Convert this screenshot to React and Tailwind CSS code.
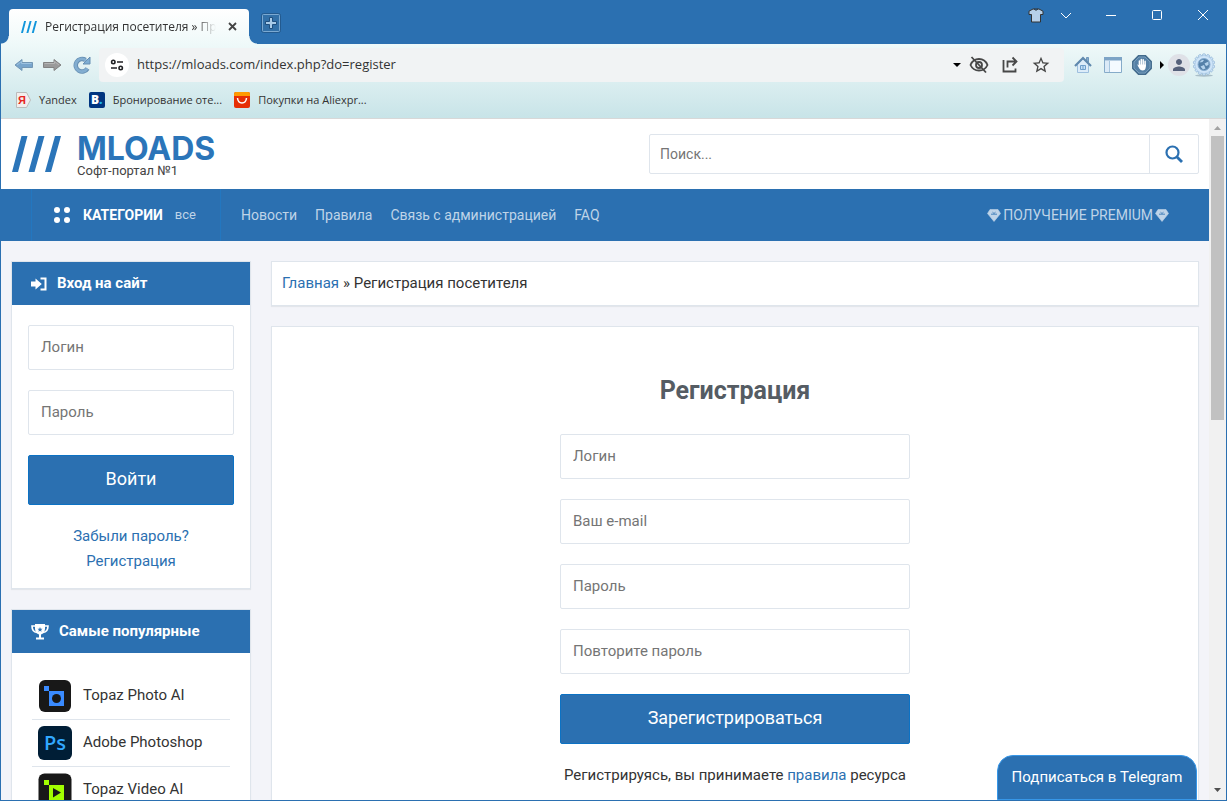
import React, { useState } from 'react';
import { MdStarBorder, MdPerson } from 'react-icons/md';

const menuLinks = ['Новости', 'Правила', 'Связь с администрацией', 'FAQ'];

const registerFields = [
  { id: 'login', label: 'Логин', type: 'text' },
  { id: 'email', label: 'Ваш e-mail', type: 'email' },
  { id: 'password', label: 'Пароль', type: 'password' },
  { id: 'password2', label: 'Повторите пароль', type: 'password' },
];

function Slashes({ className }) {
  return (
    <svg viewBox="0 0 49 36" className={className} fill="currentColor" aria-hidden="true">
      <path d="M9.5 0H15.5L6 36H0ZM26.5 0H32.5L22.5 36H16.5ZM43 0H49L39 36H33Z" />
    </svg>
  );
}

function ArrowLeft() {
  return (
    <svg viewBox="0 0 20 14" className="w-5 h-[14px]">
      <path d="M1 7L8 1.5V4.5H18.5V9.5H8V12.5Z" fill="#78a5cc" stroke="#7397b5" />
      <path d="M3 7L7.5 3.5V5.5H17.5" fill="none" stroke="#9dc2e0" />
    </svg>
  );
}

function ArrowRight() {
  return (
    <svg viewBox="0 0 20 14" className="w-5 h-[14px]">
      <path d="M19 7L12 1.5V4.5H1.5V9.5H12V12.5Z" fill="#9a9a9a" stroke="#828282" />
      <path d="M2.5 5.5H12.5V3.5L17 7" fill="none" stroke="#b5b5b5" />
    </svg>
  );
}

function Reload() {
  return (
    <svg viewBox="0 0 18 18" className="w-[18px] h-[18px]">
      <path d="M14.5 12.5A6.3 6.3 0 1 1 12.5 4" fill="none" stroke="#668fb3" strokeWidth="4.5" />
      <path d="M17 1V8H10Z" fill="#7faed4" stroke="#668fb3" />
      <path d="M14.2 12.5A6.3 6.3 0 1 1 13 4.5" fill="none" stroke="#82add0" strokeWidth="2.8" />
    </svg>
  );
}

function SiteSettings() {
  return (
    <svg viewBox="0 0 14 12" className="w-[14px] h-3" fill="none" stroke="#202124" strokeWidth="1.6">
      <circle cx="3.3" cy="3" r="1.7" />
      <path d="M7 3H13M1 9H7" />
      <circle cx="10.7" cy="9" r="1.7" />
    </svg>
  );
}

function HiddenEye() {
  return (
    <svg viewBox="0 0 20 18" className="w-5 h-[18px]" fill="none" stroke="#474747" strokeWidth="1.8">
      <path d="M1.5 9Q4 3 10 3Q16 3 18.5 9Q16 14.5 10 14.5Q4 14.5 1.5 9Z" />
      <circle cx="10" cy="9" r="3" />
      <path d="M2.5 1L17 16.5" />
    </svg>
  );
}

function Share() {
  return (
    <svg viewBox="0 0 18 18" className="w-[18px] h-[18px]" fill="none" stroke="#474747" strokeWidth="1.8">
      <path d="M2.5 4V15.5H14.5V12.5M6.5 11.5V5.5H14M11.5 1.5L15.5 5.5L11.5 9.5" />
    </svg>
  );
}

function House() {
  return (
    <svg viewBox="0 0 18 18" className="w-[18px] h-[18px]">
      <path d="M3.5 8.5L9 3L14.5 8.5V16.5H3.5Z" fill="#dcecf9" stroke="#9dbfde" />
      <path d="M12.5 1.5H14.5V6H12.5Z" fill="#86abcb" stroke="#6e97bb" />
      <path d="M1 10L9 2L17 10" fill="none" stroke="#6089ae" strokeWidth="2.2" />
      <path d="M6.5 9.5H11.5V13.5H6.5ZM9 9.5V13.5" fill="#c4e0f7" stroke="#6f9fcb" />
    </svg>
  );
}

function PanelLayout() {
  return (
    <svg viewBox="0 0 18 16" className="w-[18px] h-4">
      <path d="M.5.5H17.5V15.5H.5Z" fill="#f4faff" stroke="#86abc9" />
      <path d="M0 0H18V3.5H0Z" fill="#7da4c6" />
      <path d="M1 4H5V15H1Z" fill="#dbeaf7" />
      <path d="M5.5 4V15" stroke="#a6c5de" />
    </svg>
  );
}

function Hand() {
  return (
    <svg viewBox="0 0 20 20" className="w-5 h-5">
      <path d="M6.5.8H13.5L19.2 6.5V13.5L13.5 19.2H6.5L.8 13.5V6.5Z" fill="#5b87ad" stroke="#436b8c" strokeWidth="1.5" />
      <path d="M7 2H13L18 7V13L13 18H7L2 13V7Z" fill="#5681a6" stroke="#8fb0cb" strokeWidth=".6" />
      <path d="M7.4 11V6M9.3 10V4.6M11.2 10V4.8M13.1 11V6.2" stroke="#fff" strokeWidth="1.5" strokeLinecap="round" />
      <path d="M5.2 9.5Q6.5 9.2 7.5 11L8 9.5H13.8V12Q13.5 15.5 10.5 15.5Q8.5 15.5 7.3 13.5Z" fill="#fff" />
    </svg>
  );
}

function Gear() {
  const teeth = Array.from({ length: 14 }, (_, i) => (i * 360) / 14);
  return (
    <svg viewBox="0 0 24 24" className="w-6 h-6">
      <ellipse cx="12" cy="22.5" rx="9" ry="1.2" fill="#a9bec8" />
      {teeth.map(a => (
        <rect key={a} x="10.5" y=".8" width="3" height="4" rx="1" fill="#cfe5f8" stroke="#8db1d3" strokeWidth=".7" transform={`rotate(${a} 12 11.5)`} />
      ))}
      <circle cx="12" cy="11.5" r="9" fill="#cfe5f8" stroke="#a3c4e2" strokeWidth=".6" />
      <circle cx="12" cy="11.5" r="6" fill="#5581a8" stroke="#86acd0" />
      <path d="M7.5 9.5Q9.5 6 12 7L10.5 9ZM12.5 10.5L16.5 8.5V12L14 13ZM8.5 13.5L12 12L13.5 15.5L11 16.5Z" fill="#b4d3ec" />
    </svg>
  );
}

function Shirt() {
  return (
    <svg viewBox="0 0 16 15" className="w-4 h-[15px]">
      <path d="M5 1H11L15 3.2V6.5H12.5V14H3.5V6.5H1V3.2Z" fill="#b5cfe9" stroke="#333" strokeLinejoin="round" />
      <path d="M6 1Q8 3.5 10 1" fill="#2b70b1" stroke="#333" />
    </svg>
  );
}

function Diamond() {
  return (
    <svg viewBox="0 0 14 13" className="w-[14px] h-[13px]">
      <path d="M3 .5H11L13.5 4.5L7 12.5L.5 4.5Z" fill="#bfd4e8" stroke="#bfd4e8" strokeWidth=".6" />
      <path d="M4 5.2H10M5.5 3.2L7 4.5L8.5 3.2" stroke="#2b70b1" strokeWidth=".8" fill="none" />
    </svg>
  );
}

function LoginIcon() {
  return (
    <svg viewBox="0 0 16 14" className="w-4 h-[14px]" fill="#fff">
      <path d="M0 4.5H4.5V1.5L10.8 7L4.5 12.5V9.5H0Z" />
      <path d="M9.5 1.5H14.5V12.5H9.5" fill="none" stroke="#fff" strokeWidth="2" />
    </svg>
  );
}

function Trophy() {
  return (
    <svg viewBox="0 0 18 16" className="w-[18px] h-4">
      <path d="M4.5 2H1Q1 8 6 8.5M13.5 2H17Q17 8 12 8.5" fill="none" stroke="#fff" strokeWidth="1.6" />
      <path d="M4 0H14V5Q13.5 9.5 10 10.5V13.5H13V15.5H5V13.5H8V10.5Q4.5 9.5 4 5Z" fill="#fff" />
      <path d="M9 3L9.7 4.8H11.5L10.1 6L10.6 7.8L9 6.8L7.4 7.8L7.9 6L6.5 4.8H8.3Z" fill="#2b70b1" />
    </svg>
  );
}

function TopazPhoto() {
  return (
    <svg viewBox="0 0 34 34" className="w-[34px] h-[34px]">
      <rect x="1" y="1" width="32" height="32" rx="6" fill="#181818" />
      <path d="M6 7H11V12H6ZM11 12H26V27H11Z" fill="#3a8bff" />
      <circle cx="18.5" cy="19.5" r="4.5" fill="#181818" />
    </svg>
  );
}

function Photoshop() {
  return (
    <span className="flex items-center justify-center w-[34px] h-[34px] rounded-md bg-[#001e36] text-[#31a8ff] text-[20px] font-semibold font-['Open_Sans',sans-serif]">
      Ps
    </span>
  );
}

function TopazVideo() {
  return (
    <svg viewBox="0 0 34 34" className="w-[34px] h-[34px]">
      <rect x=".5" y=".5" width="33" height="33" rx="6" fill="#181818" />
      <path d="M6 7H11V12H6ZM11 12H26V28H11Z" fill="#a2ff00" />
      <path d="M15 15L23 19.5L15 24.5Z" fill="#181818" />
    </svg>
  );
}

const popular = [
  { name: 'Topaz Photo AI', Icon: TopazPhoto },
  { name: 'Adobe Photoshop', Icon: Photoshop },
  { name: 'Topaz Video AI', Icon: TopazVideo },
];

function TitleBar() {
  return (
    <div className="flex h-[43px] shrink-0 items-end bg-[#2b70b1] pl-2">
      <div className="relative flex h-[35px] w-60 items-center rounded-t bg-linear-to-b from-white to-[#eff9f9] px-3">
        <span className="absolute bottom-0 -left-2 w-2 h-2 bg-[radial-gradient(circle_at_0_0,#2b70b1_7px,#eff9f9_8px)]" />
        <span className="absolute bottom-0 -right-2 w-2 h-2 bg-[radial-gradient(circle_at_100%_0,#2b70b1_7px,#eff9f9_8px)]" />
        <Slashes className="w-4 h-3 text-[#1296db]" />
        <span className="ml-2 flex-1 overflow-hidden whitespace-nowrap text-[12px] text-[#333] [mask-image:linear-gradient(to_right,black_88%,transparent)]">
          Регистрация посетителя » Про
        </span>
        <button type="button" aria-label="Закрыть вкладку" className="ml-3">
          <svg viewBox="0 0 9 9" className="w-[9px] h-[9px]" stroke="#444" strokeWidth="1.8"><path d="M1 1L8 8M8 1L1 8" /></svg>
        </button>
      </div>
      <button type="button" aria-label="Новая вкладка" className="mb-[11px] ml-3">
        <svg viewBox="0 0 20 20" className="w-5 h-5">
          <rect x=".5" y=".5" width="19" height="19" rx="2" fill="#3270a8" stroke="#235a8f" />
          <rect x="1.5" y="1.5" width="17" height="17" rx="1" fill="none" stroke="#7ba9d2" />
          <path d="M8.5 4.5H11.5V8.5H15.5V11.5H11.5V15.5H8.5V11.5H4.5V8.5H8.5Z" fill="#a9cbe8" stroke="#1f4f7f" />
        </svg>
      </button>
      <div className="ml-auto flex items-center self-start pt-[5px] text-white">
        <button type="button" aria-label="Тема" className="flex w-8 h-[18px] items-center justify-center"><Shirt /></button>
        <button type="button" aria-label="Вкладки" className="flex w-7 h-[18px] items-center justify-center">
          <svg viewBox="0 0 12 7" className="w-3 h-[7px]" fill="none" stroke="currentColor"><path d="M1 1L6 6L11 1" /></svg>
        </button>
        <button type="button" aria-label="Свернуть" className="ml-2 flex w-[46px] h-[18px] items-center justify-center">
          <svg viewBox="0 0 10 10" className="w-[10px] h-[10px]" stroke="currentColor"><path d="M0 5.5H10" /></svg>
        </button>
        <button type="button" aria-label="Развернуть" className="flex w-[46px] h-[18px] items-center justify-center">
          <svg viewBox="0 0 10 10" className="w-[10px] h-[10px]" fill="none" stroke="currentColor"><rect x=".5" y=".5" width="9" height="9" rx="1" /></svg>
        </button>
        <button type="button" aria-label="Закрыть" className="flex w-[46px] h-[18px] items-center justify-center">
          <svg viewBox="0 0 10 10" className="w-[10px] h-[10px]" stroke="currentColor"><path d="M0 0L10 10M10 0L0 10" /></svg>
        </button>
      </div>
    </div>
  );
}

function Toolbar() {
  const [url, setUrl] = useState('https://mloads.com/index.php?do=register');

  return (
    <div className="shrink-0 border-b border-[#d8d8d8] bg-linear-to-b from-[#eff9f9] to-[#c8e4e8]">
      <div className="flex h-[42px] items-center pl-[13px] pr-[10px]">
        <div className="flex items-center gap-2">
          <button type="button" aria-label="Назад"><ArrowLeft /></button>
          <button type="button" aria-label="Вперёд"><ArrowRight /></button>
          <button type="button" aria-label="Обновить" className="ml-[3px]"><Reload /></button>
        </div>
        <div className="ml-2 flex h-[34px] flex-1 items-center rounded bg-[#f1f3f4] pl-[6px] pr-[13px]">
          <span className="flex w-6 h-6 items-center justify-center rounded-full bg-white"><SiteSettings /></span>
          <input aria-label="Адрес" value={url} onChange={e => setUrl(e.target.value)} className="ml-2 min-w-0 flex-1 bg-transparent text-[13px] text-[#333] outline-none" />
          <svg viewBox="0 0 8 4" className="mr-2 w-2 h-1"><path d="M0 0H8L4 4Z" /></svg>
          <button type="button" aria-label="Скрытый контент"><HiddenEye /></button>
          <button type="button" aria-label="Поделиться" className="ml-3"><Share /></button>
          <button type="button" aria-label="В закладки" className="ml-3"><MdStarBorder className="w-5 h-5 text-[#474747]" /></button>
        </div>
        <div className="ml-[10px] flex items-center gap-[10px]">
          <button type="button" aria-label="Домой"><House /></button>
          <button type="button" aria-label="Панель" className="ml-[2px]"><PanelLayout /></button>
          <button type="button" aria-label="Блокировка"><Hand /></button>
        </div>
        <svg viewBox="0 0 4 8" className="ml-2 mr-1 w-1 h-2"><path d="M0 0L4 4L0 8Z" /></svg>
        <button type="button" aria-label="Профиль" className="flex w-[22px] h-[22px] items-center justify-center rounded-full bg-[#dfe1e7]"><MdPerson className="w-[18px] h-[18px] text-[#55607a]" /></button>
        <button type="button" aria-label="Настройки" className="ml-[2px]"><Gear /></button>
      </div>
      <div className="flex h-8 items-center gap-3 pb-1 pl-[14px] text-[11px] text-[#333]">
        <a href="#yandex" className="flex items-center gap-2">
          <svg viewBox="0 0 16 16" className="w-4 h-4">
            <path d="M1.5 .5H11.5L15.5 8L11.5 15.5H1.5Z" fill="#f2eeee" stroke="#bbb" strokeLinejoin="round" />
            <text x="3" y="12" fontSize="11" fontWeight="700" fontFamily="Liberation Sans, sans-serif" fill="#e52620">Я</text>
          </svg>
          Yandex
        </a>
        <a href="#booking" className="flex items-center gap-2">
          <span className="flex w-4 h-4 items-center justify-center rounded-[2px] bg-[#003580] text-[12px] font-extrabold text-white">B<span className="text-[#1ab5f0]">.</span></span>
          Бронирование оте...
        </a>
        <a href="#aliexpress" className="flex items-center gap-2">
          <svg viewBox="0 0 16 16" className="w-4 h-4">
            <rect width="16" height="16" rx="2" fill="#e62e04" />
            <path d="M0 4V2Q0 0 2 0H14Q16 0 16 2V4Z" fill="#ff9a00" />
            <path d="M3.5 6Q4 11 8 11Q12 11 12.5 6" fill="none" stroke="#fff" strokeWidth="1.5" />
          </svg>
          Покупки на Aliexpr...
        </a>
      </div>
    </div>
  );
}

function SiteHeader() {
  return (
    <header>
      <div className="flex h-[70px] items-center justify-between bg-white px-[10px]">
        <a href="#home" className="flex items-center gap-4">
          <Slashes className="ml-px w-[49px] h-9 text-[#2b75b9]" />
          <span className="flex flex-col pt-[6px]">
            <span className="text-[32px] leading-7 font-bold text-[#2b75b9] font-[Inter,sans-serif]">MLOADS</span>
            <span className="text-[13px] leading-4 text-[#444]">Софт-портал №1</span>
          </span>
        </a>
        <form className="flex h-10 w-[550px] rounded-[2px] border border-[#dfe5ec]" onSubmit={e => e.preventDefault()}>
          <input type="search" aria-label="Поиск" placeholder="Поиск..." className="min-w-0 flex-1 px-[10px] text-[14px] outline-none placeholder:text-[#757575]" />
          <button type="submit" aria-label="Найти" className="flex w-[49px] items-center justify-center border-l border-[#dfe5ec]">
            <svg viewBox="0 0 18 18" className="w-[18px] h-[18px]" fill="none" stroke="#2b70b1" strokeWidth="2.2">
              <circle cx="7.5" cy="7.5" r="6" />
              <path d="M12 12L17 17" strokeWidth="2.8" />
            </svg>
          </button>
        </form>
      </div>
      <nav className="flex h-[52px] items-stretch bg-[#2b70b1] pl-[30px] pr-10 text-[14px] text-[#bfd4e8]">
        <a href="#categories" className="flex w-[190px] items-center border-x border-[#2377c0] pl-[22px]">
          <svg viewBox="0 0 16 16" className="w-4 h-4" fill="#fff">
            <circle cx="3" cy="3" r="3" /><circle cx="13" cy="3" r="3" /><circle cx="3" cy="13" r="3" /><circle cx="13" cy="13" r="3" />
          </svg>
          <b className="ml-[13px] text-white">КАТЕГОРИИ</b>
          <span className="ml-3 text-[13px]">все</span>
        </a>
        <div className="flex items-center gap-[18px] pl-5">
          {menuLinks.map(link => <a key={link} href="#menu">{link}</a>)}
        </div>
        <a href="#premium" className="ml-auto flex items-center gap-[2px]">
          <Diamond />ПОЛУЧЕНИЕ PREMIUM<Diamond />
        </a>
      </nav>
    </header>
  );
}

function Card({ className, children }) {
  return <section className={`border border-[#dfe5ec] bg-white shadow-[0_1px_1px_#e3e6eb] ${className || ''}`}>{children}</section>;
}

function SideTitle({ icon, children }) {
  return (
    <h2 className="flex h-[43px] items-center gap-[10px] bg-[#2b70b1] px-[19px] text-[15px] font-bold text-white">
      {icon}{children}
    </h2>
  );
}

function Field({ id, label, type }) {
  return (
    <input id={id} name={id} type={type} placeholder={label} aria-label={label} className="h-[45px] w-full rounded-[2px] border border-[#dfe5ec] px-3 pb-[2px] text-[15px] outline-none placeholder:text-[#757575]" />
  );
}

function Submit({ children }) {
  return <button type="submit" className="h-[50px] w-full rounded-[2px] border border-[#0c72c4] bg-[#2b70b1] pb-[3px] text-[18px] text-white">{children}</button>;
}

function Sidebar() {
  return (
    <aside className="flex w-60 shrink-0 flex-col gap-5">
      <Card>
        <SideTitle icon={<LoginIcon />}>Вход на сайт</SideTitle>
        <form className="flex flex-col gap-5 px-4 pt-5" onSubmit={e => e.preventDefault()}>
          <Field id="side-login" label="Логин" type="text" />
          <Field id="side-password" label="Пароль" type="password" />
          <Submit>Войти</Submit>
        </form>
        <div className="flex flex-col items-center pt-[19px] pb-[14px] leading-[25px] text-[#2b70b1]">
          <a href="#lost">Забыли пароль?</a>
          <a href="#register">Регистрация</a>
        </div>
      </Card>
      <Card>
        <SideTitle icon={<Trophy />}>Самые популярные</SideTitle>
        <ul className="px-5 pt-5">
          {popular.map(({ name, Icon }) => (
            <li key={name} className="h-[47px] border-b border-[#dfe5ec]">
              <a href="#soft" className="flex h-full items-center gap-[11px] pl-[6px]"><Icon /><span className="pb-[2px]">{name}</span></a>
            </li>
          ))}
        </ul>
      </Card>
    </aside>
  );
}

export default function App() {
  return (
    <div className="flex h-screen flex-col overflow-hidden border border-[#2b70b1] font-['Open_Sans','Noto_Sans',sans-serif]">
      <TitleBar />
      <Toolbar />
      <div className="relative flex min-h-0 flex-1">
        <div className="min-w-0 flex-1 overflow-hidden bg-[#f3f4f9] font-[Roboto,'Noto_Sans',sans-serif] text-[15px] text-[#333]">
          <SiteHeader />
          <div className="flex gap-5 px-[10px] pt-5">
            <Sidebar />
            <main className="flex min-w-0 flex-1 flex-col gap-5">
              <Card className="flex h-[45px] shrink-0 items-center gap-1 px-[10px]">
                <a href="#home" className="text-[#2b70b1]">Главная</a>
                <span>» Регистрация посетителя</span>
              </Card>
              <Card className="flex flex-1 flex-col items-center pt-12">
                <h1 className="text-[25px] leading-8 font-bold text-[#555c63]">Регистрация</h1>
                <form className="flex w-full max-w-[350px] flex-col gap-5 pt-[27px]" onSubmit={e => e.preventDefault()}>
                  {registerFields.map(field => <Field key={field.id} {...field} />)}
                  <Submit>Зарегистрироваться</Submit>
                </form>
                <p className="pt-[19px] leading-[25px]">
                  Регистрируясь, вы принимаете <a href="#rules" className="text-[#2b70b1]">правила</a> ресурса
                </p>
              </Card>
            </main>
          </div>
        </div>
        <div className="flex w-[17px] shrink-0 flex-col items-center bg-[#f1f1f1] pt-[7px] pb-2">
          <svg viewBox="0 0 7 4" className="w-[7px] h-1 shrink-0"><path d="M0 4L3.5 0L7 4Z" fill="#a3a3a3" /></svg>
          <div className="mt-[6px] h-[284px] w-[13px] bg-[#c1c1c1]" />
          <svg viewBox="0 0 7 4" className="mt-auto w-[7px] h-1 shrink-0"><path d="M0 0L3.5 4L7 0Z" fill="#505050" /></svg>
        </div>
        <a href="#telegram" className="absolute right-[29px] bottom-0 flex h-[45px] w-[200px] items-center justify-center rounded-t-2xl border border-[#3797e8] bg-[#2b70b1] font-[Roboto,'Noto_Sans',sans-serif] text-[15px] text-white">
          Подписаться в Telegram
        </a>
      </div>
    </div>
  );
}
